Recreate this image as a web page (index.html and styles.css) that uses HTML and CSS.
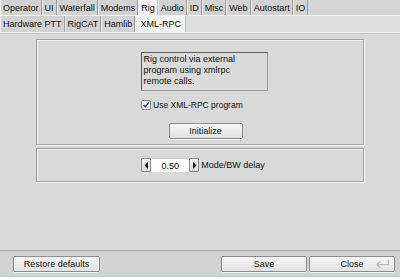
FILE: index.html
```html
<!DOCTYPE html>
<html lang="en">
<head>
  <meta charset="UTF-8">
  <title>Configuration</title>
  <link rel="stylesheet" href="styles.css">
</head>
<body>
  <div class="window">
    <div class="tabs top-tabs">
      <div class="tab">Operator</div>
      <div class="tab">UI</div>
      <div class="tab">Waterfall</div>
      <div class="tab">Modems</div>
      <div class="tab active">Rig</div>
      <div class="tab">Audio</div>
      <div class="tab">ID</div>
      <div class="tab">Misc</div>
      <div class="tab">Web</div>
      <div class="tab">Autostart</div>
      <div class="tab">IO</div>
    </div>
    <div class="tabs sub-tabs">
      <div class="tab">Hardware PTT</div>
      <div class="tab">RigCAT</div>
      <div class="tab">Hamlib</div>
      <div class="tab active">XML-RPC</div>
    </div>

    <div class="content">
      <div class="group first">
        <div class="info">Rig control via external<br>program using xmlrpc<br>remote calls.</div>
        <label class="check">
          <span class="box">
            <svg width="8" height="8" viewBox="0 0 8 8"><path d="M1.5 4 L3.2 6 L6.8 1.5" fill="none" stroke="#1d3f8a" stroke-width="1.4"/></svg>
          </span>
          Use XML-RPC program
        </label>
        <div class="btn init">Initialize</div>
      </div>

      <div class="group second">
        <div class="spinner">
          <div class="arrow">
            <svg width="5" height="7" viewBox="0 0 5 7"><path d="M4 0 L0.5 3.5 L4 7 Z" fill="#111"/></svg>
          </div>
          <div class="value">0.50</div>
          <div class="arrow">
            <svg width="5" height="7" viewBox="0 0 5 7"><path d="M1 0 L4.5 3.5 L1 7 Z" fill="#111"/></svg>
          </div>
          <span class="spin-label">Mode/BW delay</span>
        </div>
      </div>
    </div>

    <div class="footer">
      <div class="btn restore">Restore defaults</div>
      <div class="spacer"></div>
      <div class="btn save">Save</div>
      <div class="btn close">Close
        <svg class="enter" width="16" height="10" viewBox="0 0 16 10"><path d="M14.5 0.5 V5.5 H3 M6 2.5 L3 5.5 L6 8.5" fill="none" stroke="#b8b8b8" stroke-width="1.2"/></svg>
      </div>
    </div>
  </div>
</body>
</html>
```

FILE: styles.css
```css
html, body {
  margin: 0;
  padding: 0;
}

body {
  background-color: #d9d9d9;
  font-family: 'Liberation Sans', Arial, sans-serif;
  font-size: 9px;
  color: #111;
}

.window {
  width: 400px;
  height: 277px;
  display: flex;
  flex-direction: column;
  overflow: hidden;
}

.tabs {
  display: flex;
  align-items: stretch;
}

.top-tabs {
  height: 15px;
  border-bottom: 1px solid #f2f2f2;
  background-color: #d6d6d6;
}

.sub-tabs {
  height: 16px;
  background-color: #dedede;
  border-bottom: 1px solid #f0f0f0;
  box-shadow: 0 1px 0 #c4c4c4;
}

.tab {
  display: flex;
  align-items: center;
  padding: 0 2px;
  background-color: #d2d2d2;
  border-left: 1px solid #ececec;
  border-right: 1px solid #9c9c9c;
  white-space: nowrap;
}

.tab.active {
  background-color: #f3f3f3;
  border-right-color: #bdbdbd;
}

.sub-tabs .tab {
  padding: 0 2px;
}

.sub-tabs .tab.active {
  padding: 0 4px;
}

.content {
  flex: 1;
  padding: 6px 36px 0 36px;
  display: flex;
  flex-direction: column;
  gap: 3px;
}

.group {
  border: 1px solid #9d9d9d;
  border-right-color: #a8a8a8;
  border-bottom-color: #a8a8a8;
  box-shadow: 1px 1px 0 #f4f4f4, inset 1px 1px 0 #f0f0f0;
}

.first {
  height: 104px;
  display: flex;
  flex-direction: column;
  align-items: center;
}

.info {
  margin-top: 12px;
  margin-left: 8px;
  width: 121px;
  height: 35px;
  padding: 1px 2px;
  border: 1px solid #5c5c5c;
  border-right-color: #9a9a9a;
  border-bottom-color: #9a9a9a;
  background-color: #dadada;
  line-height: 11px;
  font-size: 9px;
}

.check {
  display: flex;
  align-items: center;
  gap: 2px;
  margin-top: 9px;
  margin-left: 104px;
  align-self: flex-start;
  font-size: 8.5px;
}

.box {
  width: 8px;
  height: 8px;
  background-color: #fff;
  border: 1px solid #8a8a8a;
  border-radius: 2px;
  display: flex;
  align-items: center;
  justify-content: center;
}

.btn {
  display: flex;
  align-items: center;
  justify-content: center;
  height: 14px;
  border: 1px solid #8c8c8c;
  border-radius: 2px;
  background: linear-gradient(#f6f6f6, #e2e2e2);
  box-shadow: 0 1px 0 #f4f4f4;
  font-size: 9px;
  position: relative;
}

.init {
  margin-top: 13px;
  margin-left: 11px;
  width: 72px;
}

.second {
  height: 32px;
  display: flex;
  align-items: center;
  justify-content: center;
}

.spinner {
  display: flex;
  align-items: center;
  margin-left: 6px;
}

.arrow {
  width: 8px;
  height: 12px;
  border: 1px solid #8c8c8c;
  border-radius: 1px;
  background: linear-gradient(#f4f4f4, #dcdcdc);
  display: flex;
  align-items: center;
  justify-content: center;
}

.value {
  width: 38px;
  height: 14px;
  background-color: #fff;
  border-top: 1px solid #c6c6c6;
  display: flex;
  align-items: center;
  justify-content: center;
  box-sizing: border-box;
}

.spin-label {
  margin-left: 2px;
}

.footer {
  height: 26px;
  border-top: 1px solid #a9a9a9;
  background-color: #d2d2d2;
  display: flex;
  align-items: center;
  padding: 0 5px 0 13px;
  box-shadow: inset 0 -1px 0 #b9c6d6;
}

.restore {
  width: 85px;
}

.spacer {
  flex: 1;
}

.save {
  width: 84px;
  margin-right: 2px;
}

.close {
  width: 84px;
}

.enter {
  position: absolute;
  right: 4px;
  top: 2px;
}
```
